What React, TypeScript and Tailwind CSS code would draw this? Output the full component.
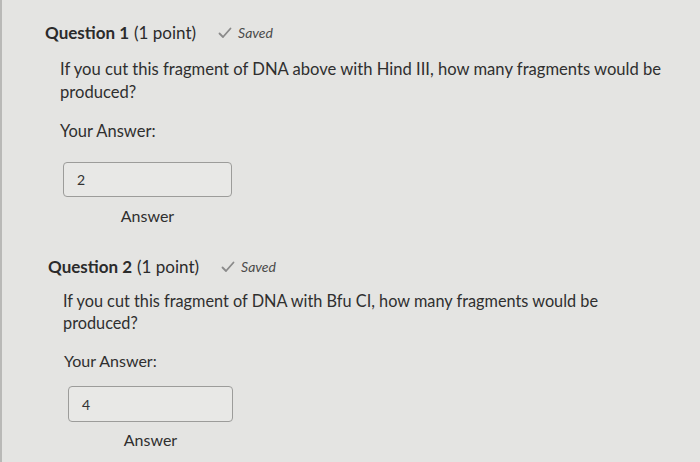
const font = { fontFamily: 'Lato, "Open Sans", sans-serif' };

function Check() {
  return (
    <svg width="14" height="12" viewBox="0 0 14 12" className="mr-[6px]">
      <path d="M1.5 6.5 L5 10 L12.5 1.5" fill="none" stroke="#8a8a8a" strokeWidth="1.8" strokeLinecap="round" strokeLinejoin="round" />
    </svg>
  );
}

function Heading({ n }: { n: number }) {
  return (
    <div className="flex items-center h-[24px] text-[17px] leading-[24px] text-[#2b2b2b]">
      <span className="font-bold">Question {n}</span>
      <span className="ml-[5px]">(1 point)</span>
      <span className="ml-[22px] flex items-center text-[14px] italic text-[#4a4a4a]">
        <Check />
        Saved
      </span>
    </div>
  );
}

function AnswerBox({ value, w, h }: { value: string; w: string; h: string }) {
  return (
    <div className={`flex flex-col items-center ${w}`}>
      <div className={`w-full ${h} flex items-center pl-[13px] rounded-[4px] border border-[#9c9c9a] bg-[#e8e8e6] text-[14px] text-[#333]`}>
        {value}
      </div>
    </div>
  );
}

export default function App() {
  return (
    <div className="w-[700px] h-[462px] flex bg-[#e4e4e2] overflow-hidden" style={font}>
      <div className="w-[2px] bg-[#b9b9b7]" />
      <div className="flex-1 flex flex-col text-[#2f2f2f]">
        {/* question 1 */}
        <div className="pt-[21px] pl-[43px]">
          <Heading n={1} />
        </div>
        <div className="mt-[13px] pl-[58px] text-[16.6px] leading-[23px]">
          <p>If you cut this fragment of DNA above with Hind III, how many fragments would be</p>
          <p>produced?</p>
        </div>
        <div className="mt-[16px] pl-[58px] text-[16.5px] leading-[23px]">Your Answer:</div>
        <div className="mt-[19px] pl-[61px] flex flex-col items-start">
          <div className="w-[169px] flex flex-col items-center">
            <AnswerBox value="2" w="w-[169px]" h="h-[35px]" />
            <div className="mt-[7px] text-[16px] leading-[23px]">Answer</div>
          </div>
        </div>

        {/* question 2 */}
        <div className="mt-[28px] pl-[46px]">
          <Heading n={2} />
        </div>
        <div className="mt-[11px] pl-[61px] text-[16.3px] leading-[22px]">
          <p>If you cut this fragment of DNA with Bfu CI, how many fragments would be</p>
          <p>produced?</p>
        </div>
        <div className="mt-[15px] pl-[62px] text-[16px] leading-[23px]">Your Answer:</div>
        <div className="mt-[14px] pl-[66px] flex flex-col items-start">
          <div className="w-[165px] flex flex-col items-center">
            <AnswerBox value="4" w="w-[165px]" h="h-[36px]" />
            <div className="mt-[6px] text-[16px] leading-[23px]">Answer</div>
          </div>
        </div>
      </div>
    </div>
  );
}
